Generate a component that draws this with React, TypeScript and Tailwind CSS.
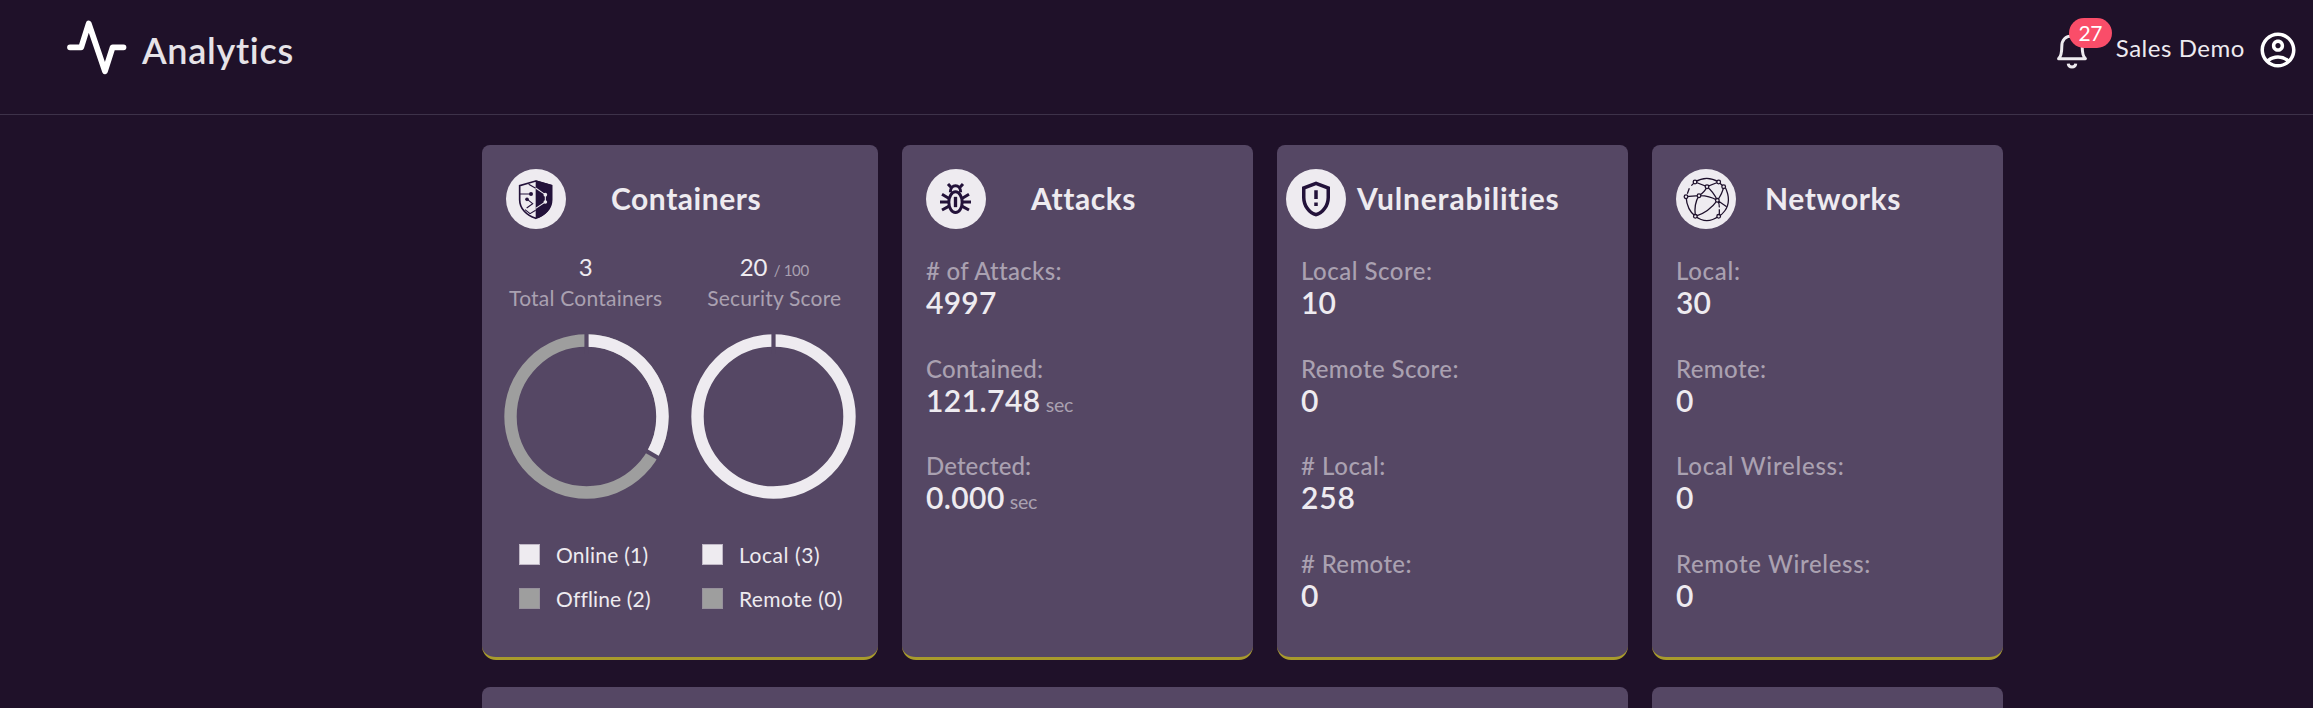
import React from "react";
import { MdOutlineAccountCircle, MdOutlineGppMaybe } from "react-icons/md";

const INK = "#23123a";

function PulseIcon() {
  return (
    <svg className="h-[60px] w-[62px]" viewBox="0 0 62 60" fill="none" stroke="#fff" strokeWidth="5.8" strokeLinecap="round" strokeLinejoin="round">
      <path d="M4 30.3H15.2L22.7 6.5L39 54.2L46.6 30.3H57.5" />
    </svg>
  );
}

function BellIcon() {
  return (
    <svg className="h-[38px] w-[32px]" viewBox="0 0 32 38" fill="none" stroke="#eeebf0" strokeLinejoin="round" strokeLinecap="round">
      <path strokeWidth="3" d="M2.6 27.7C5 25.5 5.8 21.5 5.8 15.5C5.8 9 9.5 5 16 5C22.5 5 26.2 9 26.2 15.5C26.2 21.5 27 25.5 29.4 27.7Z" />
      <path strokeWidth="3" strokeLinecap="butt" d="M12.2 32.6C12.8 37.2 19.2 37.2 19.8 32.6" />
    </svg>
  );
}

function ContainerShieldIcon() {
  return (
    <svg className="size-[60px]" viewBox="0 0 180 180" fill="none">
      <path d="M89 36L137 50V92C137 119 116 139 89 148C62 139 41 119 41 92V50Z" fill="#eeebf0" stroke={INK} strokeWidth="5" />
      <path d="M89 34L138 48V92C138 120 117 141 89 149Z" fill={INK} />
      <path d="M42 75H74M64 91L80 104L62 117M68 46L89 58M57 122L72 134L89 124" stroke={INK} strokeWidth="3.4" />
      <path d="M89 57L118 77V99L89 118" stroke="#eeebf0" strokeWidth="3.2" />
      <g fill={INK}>
        <circle cx="75" cy="75" r="6" />
        <circle cx="63" cy="91" r="5.5" />
      </g>
      <g fill="#eeebf0">
        <circle cx="118" cy="77" r="5.5" />
        <circle cx="118" cy="99" r="5.5" />
      </g>
    </svg>
  );
}

function BugIcon() {
  return (
    <svg className="size-[60px]" viewBox="0 0 180 180" fill="none" stroke={INK} strokeWidth="9">
      <ellipse cx="88.500" cy="99.500" rx="20" ry="31" />
      <path d="M84 84H93V114H84Z" fill={INK} strokeWidth="1" />
      <path d="M73 70C73 44 104 44 104 70" />
      <path d="M66 45L78 58M111 45L99 58M42 99H66M111 99H135M48 76L68 88M129 76L109 88M48 123L68 112M129 123L109 112" />
    </svg>
  );
}

const nodes = [[57, 39], [128, 39], [143, 53], [93, 53], [30, 83], [69, 80], [124, 94], [58, 142], [128, 142]];

function NetworkIcon() {
  return (
    <svg className="size-[60px]" viewBox="0 0 180 180" fill="none" stroke="#1d0f2b" strokeWidth="3.8">
      <path d="M57 39Q92 17 128 39M147 53Q168 96 146 126Q138 137 128 142Q92 168 58 142Q33 123 30 83M34 74L40 58M46 50L57 39M128 39L143 53" />
      <path d="M57 39L93 53L128 39M93 53Q86 69 69 80M93 53Q113 69 124 94M143 53Q139 75 124 94M30 83L69 80Q98 79 124 94L152 113M69 80Q53 105 58 142M124 94Q98 130 58 142M124 94Q131 103 130 115M130 121V142" />
      {nodes.map(([x, y]) => (
        <circle key={`${x}-${y}`} cx={x} cy={y} r="5.500" fill="#eeebf0" />
      ))}
    </svg>
  );
}

function Donut({ full }: { full?: boolean }) {
  return (
    <svg className="size-[165px]" viewBox="0 0 165 165" fill="none" strokeWidth="12.4">
      <circle cx="82.500" cy="82.500" r="76" stroke={full ? "#eeebf0" : "#9e9e9e"} />
      {!full && <path d="M82.500 6.500A76 76 0 0 1 148.320 120.500" stroke="#eeebf0" />}
      <path d="M82.500 0V20" stroke="#554764" strokeWidth="4.200" />
      {!full && <path d="M139 115.100L157 125.500" stroke="#554764" strokeWidth="4.200" />}
    </svg>
  );
}

function Badge({ children }: { children: React.ReactNode }) {
  return <div className="flex size-[60px] shrink-0 items-center justify-center rounded-full bg-[#eeebf0] text-[#23123a]">{children}</div>;
}

const card = "h-[515px] rounded-lg border-b-3 border-[#a89b2c] bg-[#554764] pt-6 rounded-b-[14px]";
const title = "pb-[3px] text-[30px] leading-[36px] font-bold";

interface Stat {
  label: string;
  value: string;
  labelTracking: string;
  valueTracking?: string;
  unit?: string;
}

function Stats({ items }: { items: Stat[] }) {
  return (
    <div className="mt-[27px] flex flex-col gap-[32.5px] pl-6">
      {items.map((s) => (
        <div key={s.label} className="h-[65px]">
          <div className={`text-[24px] leading-[30px] font-medium text-[#aaa1b1] ${s.labelTracking}`}>{s.label}</div>
          <div className="-mt-[2px] flex h-[36px] items-baseline gap-[5px] leading-[36px]">
            <span className={`text-[30px] font-semibold ${s.valueTracking ?? ""}`}>{s.value}</span>
            {s.unit && <span className="text-[19.5px] tracking-[-0.2px] text-[#aaa1b1]">{s.unit}</span>}
          </div>
        </div>
      ))}
    </div>
  );
}

const attacks: Stat[] = [
  { label: "# of Attacks:", value: "4997", labelTracking: "tracking-[0.3px]", valueTracking: "tracking-[0.25px]" },
  { label: "Contained:", value: "121.748", unit: "sec", labelTracking: "tracking-[0.25px]", valueTracking: "tracking-[0.45px]" },
  { label: "Detected:", value: "0.000", unit: "sec", labelTracking: "tracking-[0.1px]", valueTracking: "tracking-[0.4px]" },
];
const vulnerabilities: Stat[] = [
  { label: "Local Score:", value: "10", labelTracking: "tracking-[0.5px]" },
  { label: "Remote Score:", value: "0", labelTracking: "tracking-[0.4px]" },
  { label: "# Local:", value: "258", labelTracking: "tracking-[0.55px]", valueTracking: "tracking-[0.8px]" },
  { label: "# Remote:", value: "0", labelTracking: "tracking-[0.35px]" },
];
const networks: Stat[] = [
  { label: "Local:", value: "30", labelTracking: "tracking-[0.7px]" },
  { label: "Remote:", value: "0", labelTracking: "tracking-[0.4px]" },
  { label: "Local Wireless:", value: "0", labelTracking: "tracking-[0.75px]" },
  { label: "Remote Wireless:", value: "0", labelTracking: "tracking-[0.65px]" },
];

function Legend({ items }: { items: { text: string; swatch: string; tracking: string }[] }) {
  return (
    <div className="flex flex-col gap-[23px]">
      {items.map((i) => (
        <div key={i.text} className="flex h-[21px] items-center gap-4">
          <span className={`size-[21px] border border-[#8f8499]/50 ${i.swatch}`} />
          <span className={`text-[21px] leading-[21px] ${i.tracking}`}>{i.text}</span>
        </div>
      ))}
    </div>
  );
}

export default function App() {
  return (
    <div className="h-[708px] w-full overflow-hidden bg-[#1f1129] font-['Lato','Noto_Sans',sans-serif] text-[#eeebf0] [font-variant-ligatures:none]">
      <header className="flex h-[115px] items-start justify-between border-b border-[#3d3249] pr-[14px] pl-[66px]">
        <div className="flex items-start gap-[14px] pt-[17px]">
          <PulseIcon />
          <h1 className="pt-[12px] text-[36px] leading-[42px] font-semibold tracking-[0.7px] text-[#e6e3e8]">Analytics</h1>
        </div>
        <div className="flex items-start">
          <div className="relative mt-[31px] mr-[28px]">
            <BellIcon />
            <span className="absolute -top-[13px] left-[13px] flex h-[30px] w-[43px] items-center justify-center rounded-full bg-[#fa4d69] pb-px text-[21px] leading-[24px] tracking-[-0.4px] text-white">27</span>
          </div>
          <span className="mt-[33px] mr-[12px] text-[24px] leading-[30px] tracking-[0.55px]">Sales Demo</span>
          <MdOutlineAccountCircle className="mt-[29px] size-[42px] text-white" />
        </div>
      </header>

      <main className="flex flex-col gap-[27px] pt-[30px] pl-[482px]">
        <div className="grid grid-cols-[396px_351px_351px_351px] gap-6">
          <section className={card}>
            <div className="flex items-center gap-[45px] pl-6">
              <Badge><ContainerShieldIcon /></Badge>
              <h2 className={`${title} tracking-[0.55px]`}>Containers</h2>
            </div>
            <div className="mt-5 grid grid-cols-2 px-[9.5px] text-center">
              <div>
                <div className="h-[36px] text-[24px] leading-[36px]">3</div>
                <div className="text-[21px] leading-[26px] tracking-[0.23px] text-[#aaa1b1]">Total Containers</div>
              </div>
              <div>
                <div className="h-[36px] text-[24px] leading-[36px]">20 <span className="text-[15px] tracking-[-0.3px] text-[#aaa1b1]">/ 100</span></div>
                <div className="text-[21px] leading-[26px] tracking-[0.2px] text-[#aaa1b1]">Security Score</div>
              </div>
            </div>
            <div className="mt-[23px] flex gap-[22px] pl-[21.5px]">
              <Donut />
              <Donut full />
            </div>
            <div className="mt-[45px] grid grid-cols-[183px_1fr] pl-[37px]">
              <Legend items={[
                { text: "Online (1)", swatch: "bg-[#eeebf0]", tracking: "tracking-[0.25px]" },
                { text: "Offline (2)", swatch: "bg-[#9e9e9e]", tracking: "tracking-[0.15px]" },
              ]} />
              <Legend items={[
                { text: "Local (3)", swatch: "bg-[#eeebf0]", tracking: "tracking-[0.55px]" },
                { text: "Remote (0)", swatch: "bg-[#9e9e9e]", tracking: "tracking-[0.4px]" },
              ]} />
            </div>
          </section>

          <section className={card}>
            <div className="flex items-center gap-[45px] pl-6">
              <Badge><BugIcon /></Badge>
              <h2 className={`${title} tracking-[0.55px]`}>Attacks</h2>
            </div>
            <Stats items={attacks} />
          </section>

          <section className={card}>
            <div className="flex items-center gap-[11px] pl-[9px]">
              <Badge><MdOutlineGppMaybe className="size-[42px]" /></Badge>
              <h2 className={`${title} tracking-[0.8px]`}>Vulnerabilities</h2>
            </div>
            <Stats items={vulnerabilities} />
          </section>

          <section className={card}>
            <div className="flex items-center gap-[29px] pl-6">
              <Badge><NetworkIcon /></Badge>
              <h2 className={`${title} tracking-[0.6px]`}>Networks</h2>
            </div>
            <Stats items={networks} />
          </section>
        </div>

        <div className="grid grid-cols-[1146px_351px] gap-6">
          <section className="h-[120px] rounded-lg bg-[#554764]" />
          <section className="h-[120px] rounded-lg bg-[#554764]" />
        </div>
      </main>
    </div>
  );
}
